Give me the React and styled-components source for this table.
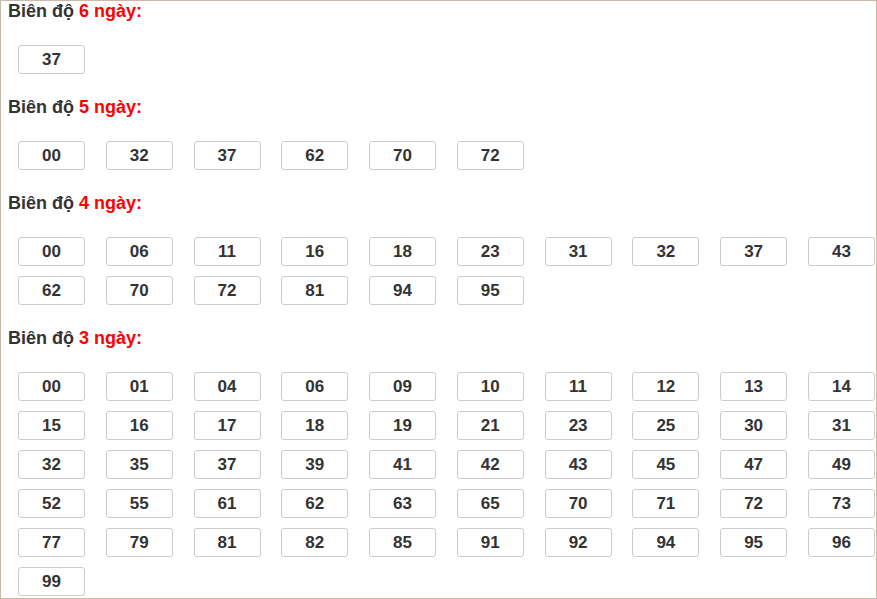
import React from "react";
import styled, { createGlobalStyle } from "styled-components";

const GlobalStyle = createGlobalStyle`
    html, body {
        margin: 0;
        padding: 0;
        background: #fff;
    }
    body {
        font-family: "Liberation Sans", Arial, sans-serif;
    }
`;

const Page = styled.div`
    width: 877px;
    height: 599px;
    box-sizing: border-box;
    border: 1px solid #c8b9aa;
    padding: 0 0 0 7px;
    overflow: hidden;
    background: #fff;
`;

const Title = styled.div`
    font-size: 18px;
    font-weight: bold;
    line-height: 21px;
    color: #333;
`;

const Red = styled.span`
    color: #f00;
`;

const Grid = styled.div`
    display: grid;
    grid-template-columns: repeat(10, 67px);
    column-gap: 20.78px;
    row-gap: 10px;
    margin: 23px 0 23px 10px;
`;

const Num = styled.div`
    height: 29px;
    box-sizing: border-box;
    border: 1px solid #ccc;
    border-radius: 3px;
    display: flex;
    align-items: center;
    justify-content: center;
    font-size: 17px;
    font-weight: bold;
    color: #333;
`;

const groups = [
    { days: 6, nums: ["37"] },
    { days: 5, nums: ["00", "32", "37", "62", "70", "72"] },
    {
        days: 4,
        nums: ["00", "06", "11", "16", "18", "23", "31", "32", "37", "43", "62", "70", "72", "81", "94", "95"],
    },
    {
        days: 3,
        nums: [
            "00", "01", "04", "06", "09", "10", "11", "12", "13", "14",
            "15", "16", "17", "18", "19", "21", "23", "25", "30", "31",
            "32", "35", "37", "39", "41", "42", "43", "45", "47", "49",
            "52", "55", "61", "62", "63", "65", "70", "71", "72", "73",
            "77", "79", "81", "82", "85", "91", "92", "94", "95", "96",
            "99",
        ],
    },
];

export default function App() {
    return (
        <>
            <GlobalStyle />
            <Page>
                {groups.map(g => (
                    <React.Fragment key={g.days}>
                        <Title>
                            Biên độ <Red>{g.days} ngày:</Red>
                        </Title>
                        <Grid>
                            {g.nums.map((n, i) => (
                                <Num key={i}>{n}</Num>
                            ))}
                        </Grid>
                    </React.Fragment>
                ))}
            </Page>
        </>
    );
}
